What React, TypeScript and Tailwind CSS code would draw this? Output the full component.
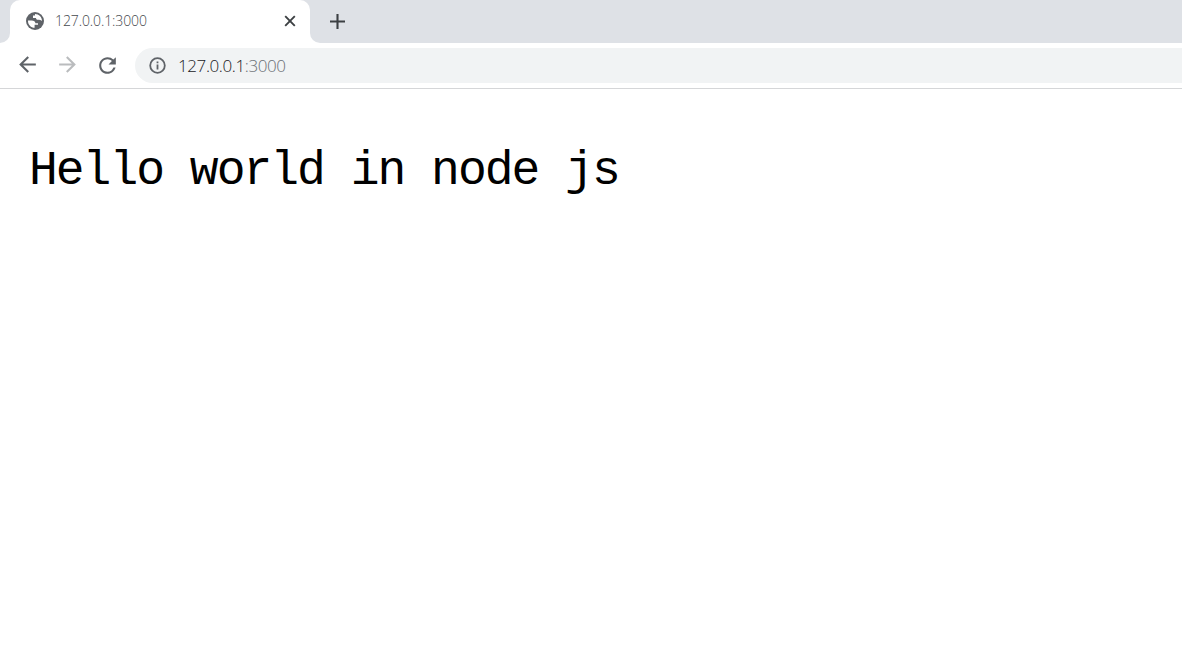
import React from 'react';
import { MdArrowBack, MdArrowForward, MdRefresh } from 'react-icons/md';

function GlobeIcon() {
  return (
    <svg viewBox="0 0 18 18" className="size-[18px]" fill="none">
      <circle cx="9" cy="9" r="9" fill="#5f6368" />
      <path
        d="M2 8.4 H5.6 C8 8.4 9.2 9.4 9.4 11.2 H12 V12.8 H8.6 V15.8 C5 15.8 2 12.8 2 9 Z"
        fill="#fff"
      />
      <path d="M9 2 C13 2 16 5.1 16 9 C14.5 8 13.6 7.8 12 7.8 C10.6 7.8 10 7 10 6 H7 V3.6 H9 Z" fill="#fff" />
    </svg>
  );
}

function TabStrip() {
  return (
    <div className="flex h-[43px] bg-white">
      <div className="w-[10px] rounded-br-[10px] bg-[#dee1e6]" />
      <div className="w-[300px] bg-[#dee1e6]">
        <div className="flex h-[42px] items-center rounded-t-[10px] bg-white pl-[16px] pr-[11px]">
          <GlobeIcon />
          <span className="ml-[11px] grow text-[14px] font-[350] leading-none tracking-[-0.1px] text-[#45494d]">127.0.0.1:3000</span>
          <svg viewBox="0 0 18 18" className="size-[18px]" fill="none" stroke="#3c4043" strokeWidth="1.9">
            <path d="M4.2 4.2 L13.8 13.8 M13.8 4.2 L4.2 13.8" />
          </svg>
        </div>
        <div className="h-px bg-white" />
      </div>
      <div className="flex grow items-center rounded-bl-[10px] bg-[#dee1e6] pb-px pl-[20px]">
        <svg viewBox="0 0 15 15" className="size-[15px]" fill="none" stroke="#3c4043" strokeWidth="2.1">
          <path d="M0 7.5 H15 M7.5 0 V15" />
        </svg>
      </div>
    </div>
  );
}

function Toolbar() {
  return (
    <div className="flex h-[46px] items-center border-b border-[#d5d6d8] bg-white pl-[15px]">
      <MdArrowBack className="mb-[2px] size-[25px] text-[#5f6368]" />
      <MdArrowForward className="mb-[2px] ml-[15px] size-[25px] text-[#babcbe]" />
      <MdRefresh className="mb-px ml-[15px] size-[25px] text-[#5f6368]" />
      <div className="ml-[15px] flex h-[35px] grow items-center rounded-l-full bg-[#f1f3f4] pl-[14px]">
        <svg viewBox="0 0 17 17" className="size-[17px]" fill="none" stroke="#5f6368" strokeWidth="1.8">
          <circle cx="8.5" cy="8.5" r="7.3" />
          <path d="M8.5 7.6 V12.5 M8.5 4.4 V6.2" />
        </svg>
        <span className="ml-[12px] text-[17px] font-[350] leading-none tracking-[-0.4px] text-[#202124]">
          127.0.0.1<span className="text-[#6b6f74]">:3000</span>
        </span>
      </div>
    </div>
  );
}

export default function App() {
  return (
    <div className="h-[654px] w-full overflow-hidden bg-white font-['Open_Sans','Noto_Sans',sans-serif]">
      <TabStrip />
      <Toolbar />
      <pre className="pl-[29px] pt-[54px] font-['Liberation_Mono',monospace] text-[48px] leading-[56px] tracking-[-2px] text-black">Hello world in node js</pre>
    </div>
  );
}
